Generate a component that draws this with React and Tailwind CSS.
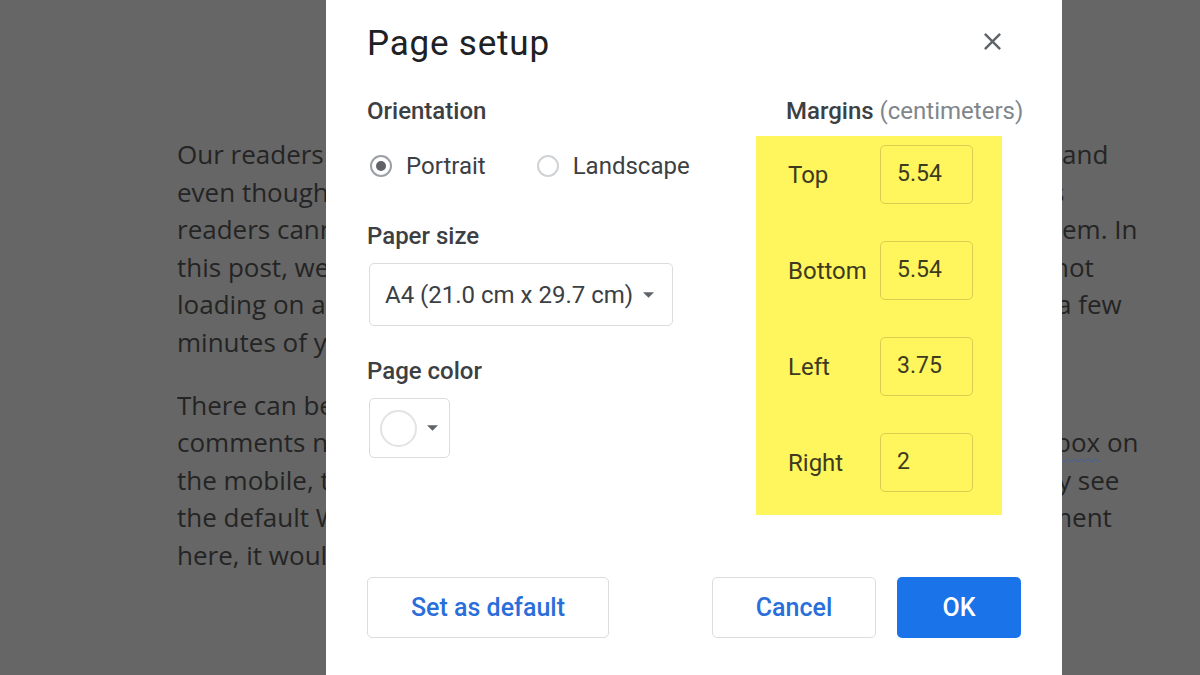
import { useState } from "react";

const para1 = [
  { left: "Our readers have been asking us about a common problem and", right: "and", shift: "ml-0" },
  { left: "even though it looks like a small issue, it can be frustrating as", right: "s", shift: "-ml-[10px]" },
  { left: "readers cannot post or read comments below the posts on them. In", right: "em. In", shift: "ml-0" },
  { left: "this post, we will show you how to fix WordPress comments not", right: "not", shift: "-ml-[9px]" },
  { left: "loading on a post and how you can solve it easily within a few", right: "a few", shift: "-ml-[5px]" },
  { left: "minutes of your time.", right: "", shift: "ml-0" },
];

const para2 = [
  { left: "There can be several reasons why this issue occurs on a site.", right: "", shift: "ml-0" },
  { left: "comments not loading issue occurs only inside the comment box on", right: "box", extra: " on", shift: "-ml-[7px]" },
  { left: "the mobile, then there is a chance that users can only see", right: "y see", shift: "-ml-[4px]" },
  { left: "the default WordPress commenting system. If the comment", right: "ment", shift: "-ml-[14px]" },
  { left: "here, it would not load on the page at all.", right: "", shift: "ml-0" },
];

function DocLine({ line }) {
  return (
    <div className="grid h-[37.6px] grid-cols-[885px_auto] leading-[37.6px]">
      <div className="overflow-hidden whitespace-nowrap">{line.left}</div>
      <div className={`whitespace-nowrap ${line.shift}`}>
        {line.extra ? (
          <>
            <span className="underline decoration-wavy decoration-[#3d5fa8] decoration-1 underline-offset-[6px]">
              {line.right}
            </span>
            {line.extra}
          </>
        ) : (
          line.right
        )}
      </div>
    </div>
  );
}

function Radio({ checked, label }) {
  return (
    <label className="flex items-center gap-[14px]">
      <span
        className={`flex h-[22px] w-[22px] items-center justify-center rounded-full border-2 ${
          checked ? "border-[#9aa0a6]" : "border-[#d0d3d6]"
        }`}
      >
        {checked && <span className="h-[10px] w-[10px] rounded-full bg-[#5f6368]" />}
      </span>
      <span>{label}</span>
    </label>
  );
}

function Caret() {
  return (
    <svg width="11" height="6" viewBox="0 0 10 5" className="fill-[#5f6368]">
      <path d="M0 0l5 5 5-5z" />
    </svg>
  );
}

const margins = [
  { label: "Top", value: "5.54" },
  { label: "Bottom", value: "5.54" },
  { label: "Left", value: "3.75" },
  { label: "Right", value: "2" },
];

export default function App() {
  const [orientation] = useState("portrait");

  return (
    <div className="relative h-[675px] w-[1200px] overflow-hidden bg-[#666666]">
      <div className="pl-[177px] pt-[136px] font-['Open_Sans',sans-serif] text-[26px] text-[#242424]">
        <div>
          {para1.map((line, i) => (
            <DocLine key={i} line={line} />
          ))}
        </div>
        <div className="mt-[25px]">
          {para2.map((line, i) => (
            <DocLine key={i} line={line} />
          ))}
        </div>
      </div>

      <div className="absolute left-[326px] top-0 z-10 h-[700px] w-[736px] bg-white px-[41px] pt-[24px] font-['Roboto',sans-serif] text-[#3c4043]">
        <div className="flex items-start justify-between">
          <h1 className="text-[35px] leading-[40px] tracking-[0.8px] text-[#202124]">Page setup</h1>
          <svg width="29" height="29" viewBox="0 0 24 24" className="mr-[14px] mt-[3px] fill-[#5f6368]">
            <path d="M19 6.41L17.59 5 12 10.59 6.41 5 5 6.41 10.59 12 5 17.59 6.41 19 12 13.41 17.59 19 19 17.59 13.41 12z" />
          </svg>
        </div>

        <div className="mt-[35px] flex justify-between">
          <div className="flex flex-col text-[24px]">
            <div className="font-medium leading-[24px] text-[#3c4043]">Orientation</div>
            <div className="ml-[3px] mt-[31px] flex items-center gap-[51px] leading-[24px]">
              <Radio checked={orientation === "portrait"} label="Portrait" />
              <Radio checked={orientation === "landscape"} label="Landscape" />
            </div>

            <div className="mt-[46px] font-medium leading-[24px]">Paper size</div>
            <div className="ml-[2px] mt-[15px] flex h-[63px] w-[304px] items-center gap-[10px] rounded-[5px] border border-[#dadce0] pl-[15px] leading-[24px] text-[#3c4043]">
              <span>A4 (21.0 cm x 29.7 cm)</span>
              <Caret />
            </div>

            <div className="mt-[33px] font-medium leading-[24px]">Page color</div>
            <div className="ml-[2px] mt-[15px] flex h-[60px] w-[81px] items-center gap-[10px] rounded-[5px] border border-[#dadce0] pl-[10px]">
              <span className="h-[37px] w-[37px] rounded-full border-2 border-[#e2e3e5] bg-white" />
              <Caret />
            </div>
          </div>

          <div className="flex w-[235px] flex-col">
            <div className="whitespace-nowrap text-[24px] leading-[24px]">
              <span className="font-medium text-[#3c4043]">Margins</span>{" "}
              <span className="text-[#80868b]">(centimeters)</span>
            </div>
            <div className="ml-[-30px] mt-[13px] flex w-[246px] flex-col gap-[37px] bg-[#fff55d] pb-[23px] pl-[32px] pt-[9px] text-[24px] text-[#3d3b1f]">
              {margins.map((m) => (
                <div key={m.label} className="flex items-center">
                  <span className="w-[92px]">{m.label}</span>
                  <div className="flex h-[59px] w-[93px] items-center rounded-[5px] border border-[#d8cf52] pl-[16px] text-[23px]">
                    {m.value}
                  </div>
                </div>
              ))}
            </div>
          </div>
        </div>

        <div className="mt-[62px] flex items-center justify-between text-[25px] font-medium">
          <button className="h-[61px] w-[242px] rounded-[5px] border border-[#dadce0] text-[#2a6fd9]">
            Set as default
          </button>
          <div className="flex gap-[21px]">
            <button className="h-[61px] w-[164px] rounded-[5px] border border-[#dadce0] text-[#2a6fd9]">
              Cancel
            </button>
            <button className="h-[61px] w-[124px] rounded-[5px] bg-[#1a73e8] text-white">OK</button>
          </div>
        </div>
      </div>
    </div>
  );
}
